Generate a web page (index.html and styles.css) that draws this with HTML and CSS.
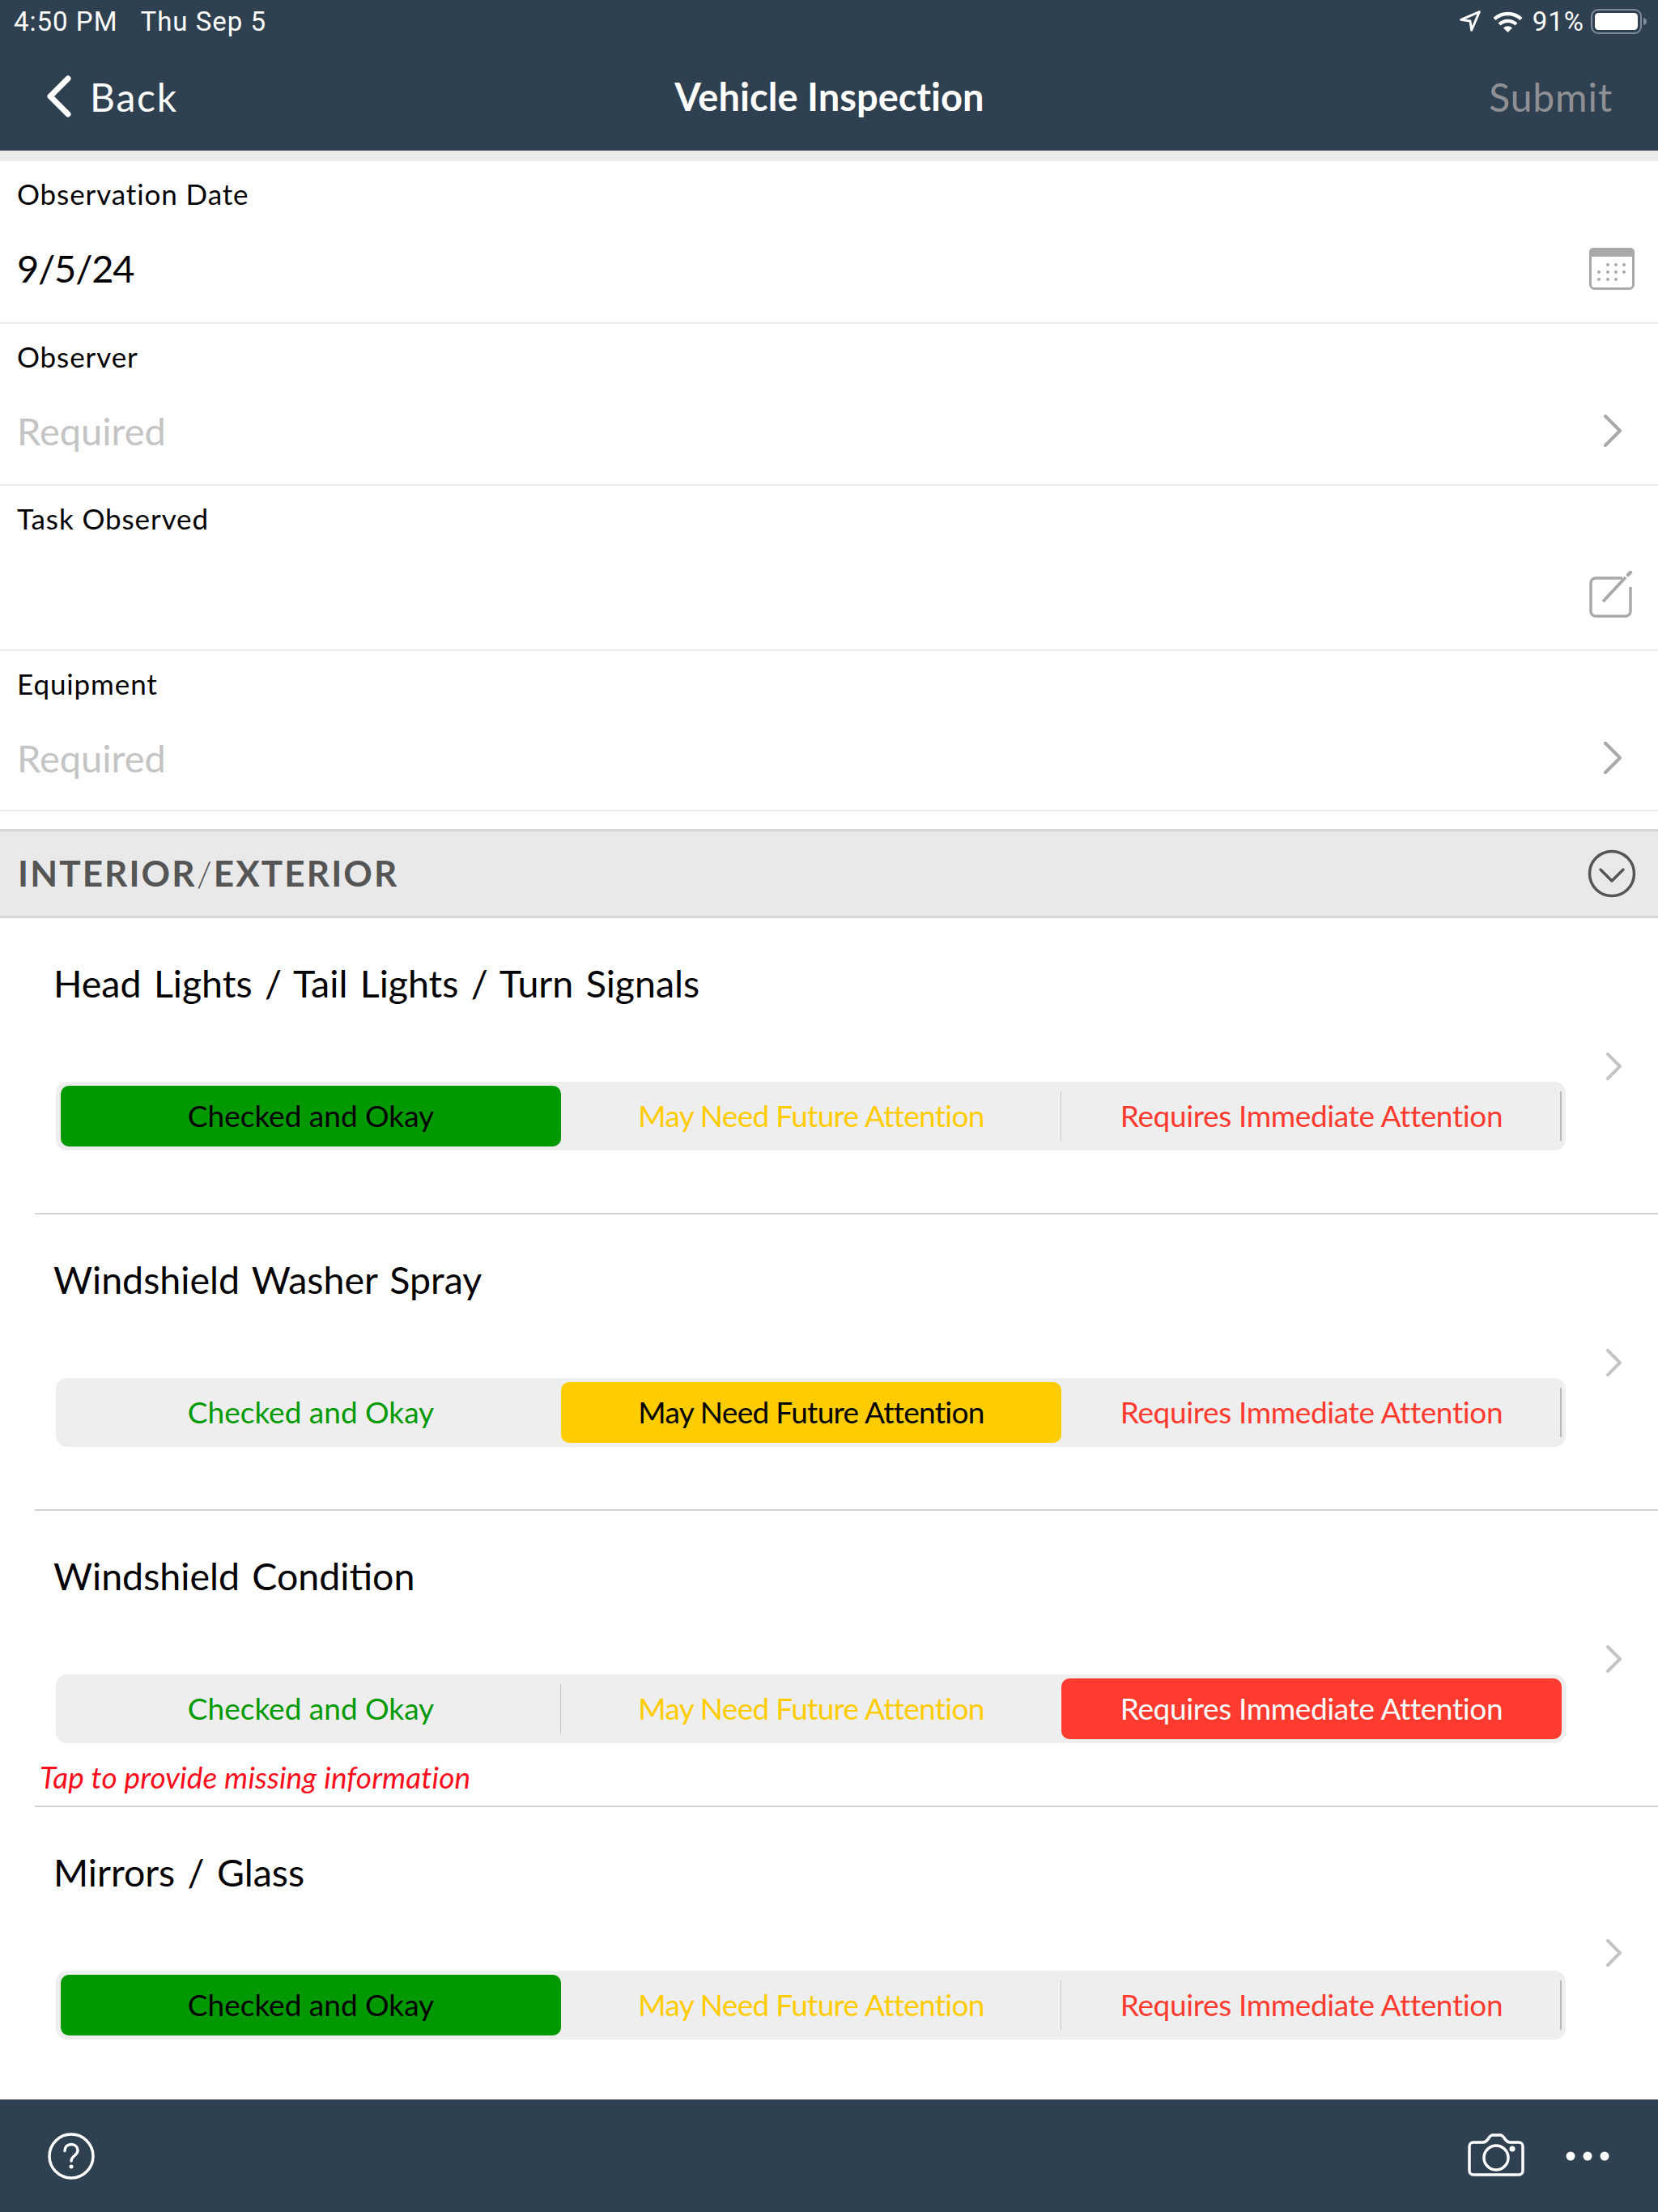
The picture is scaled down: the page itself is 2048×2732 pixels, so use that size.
FILE: index.html
```html
<!DOCTYPE html>
<html lang="en">
<head>
<meta charset="utf-8">
<title>Vehicle Inspection</title>
<link rel="stylesheet" href="styles.css">
</head>
<body>
<div class="app">
  <header class="topbar">
    <div class="status">
      <div class="status-left"><span>4:50 PM</span><span>Thu Sep 5</span></div>
      <div class="status-right">
        <svg class="ic-loc" viewBox="0 0 24 24"><path d="M22.5 1.5 1.5 10.5l10.5 1.5 1.5 10.5z" fill="none" stroke="#fff" stroke-width="2.6" stroke-linejoin="round"/></svg>
        <svg class="ic-wifi" viewBox="0 0 37 27"><path d="M2 10.5a24 24 0 0 1 33 0M8 17a15.500 15.500 0 0 1 21 0" fill="none" stroke="#fff" stroke-width="4.400"/><path d="M13 21.500a8 8 0 0 1 11 0l-5.500 5.500z" fill="#fff"/></svg>
        <span class="pct">91%</span>
        <svg class="ic-batt" viewBox="0 0 69 31"><rect x="1" y="1" width="61" height="29" rx="8" fill="none" stroke="#7f8b97" stroke-width="2"/><rect x="5" y="5" width="53" height="21" rx="4.500" fill="#fff"/><path d="M65 11c2.500.5 4 2 4 4.500s-1.500 4-4 4.500z" fill="#7f8b97"/></svg>
      </div>
    </div>
    <nav class="nav">
      <a class="back"><svg class="ic-back" viewBox="0 0 32 52"><path d="M27 4 5 26l22 22" fill="none" stroke="#fff" stroke-width="7" stroke-linecap="round" stroke-linejoin="round"/></svg><span>Back</span></a>
      <h1 class="nav-title">Vehicle Inspection</h1>
      <a class="submit">Submit</a>
    </nav>
  </header>

  <main class="content">
    <section class="field field-first">
      <div class="field-label">Observation Date</div>
      <div class="field-value">
        <span class="date">9/5/24</span>
        <svg class="slot ic-cal" viewBox="0 0 60 54"><rect x="3.500" y="2.500" width="53" height="49" rx="5" fill="#fff" stroke="#a9a9a9" stroke-width="3"/><path d="M2 12V6a5 5 0 0 1 5-5h46a5 5 0 0 1 5 5v6z" fill="#a9a9a9"/><g fill="#a9a9a9"><circle cx="25" cy="22" r="2"/><circle cx="35" cy="22" r="2"/><circle cx="45" cy="22" r="2"/><circle cx="14" cy="31" r="2"/><circle cx="25" cy="31" r="2"/><circle cx="35" cy="31" r="2"/><circle cx="45" cy="31" r="2"/><circle cx="14" cy="40" r="2"/><circle cx="25" cy="40" r="2"/><circle cx="35" cy="40" r="2"/></g></svg>
      </div>
    </section>
    <section class="field">
      <div class="field-label">Observer</div>
      <div class="field-value placeholder">
        <span>Required</span>
        <svg class="slot chev" viewBox="0 0 60 40"><path d="M22 2l18 18-18 18" fill="none" stroke="#a9a9a9" stroke-width="4" stroke-linecap="round" stroke-linejoin="round"/></svg>
      </div>
    </section>
    <section class="field field-tall">
      <div class="field-label">Task Observed</div>
      <div class="field-value">
        <span></span>
        <svg class="slot ic-edit" viewBox="0 0 60 58"><path d="M43 9H10a6 6 0 0 0-6 6v35a6 6 0 0 0 6 6h37a6 6 0 0 0 6-6V20" fill="none" stroke="#a9a9a9" stroke-width="3.500"/><path d="M19 38 47 8" fill="none" stroke="#a9a9a9" stroke-width="4"/><path d="M50 5l3-3" fill="none" stroke="#a9a9a9" stroke-width="4.500" stroke-linecap="round"/></svg>
      </div>
    </section>
    <section class="field field-short">
      <div class="field-label">Equipment</div>
      <div class="field-value placeholder">
        <span>Required</span>
        <svg class="slot chev" viewBox="0 0 60 40"><path d="M22 2l18 18-18 18" fill="none" stroke="#a9a9a9" stroke-width="4" stroke-linecap="round" stroke-linejoin="round"/></svg>
      </div>
    </section>

    <div class="section-head">
      <h2>INTERIOR<span class="slash">/</span>EXTERIOR</h2>
      <svg class="slot" viewBox="0 0 60 60"><circle cx="30" cy="30" r="27.500" fill="none" stroke="#555" stroke-width="3.500"/><path d="M16 25l14 14 14-14" fill="none" stroke="#555" stroke-width="3.500" stroke-linecap="round" stroke-linejoin="round"/></svg>
    </div>

    <article class="item">
      <div class="item-main">
        <div class="item-title">Head Lights / Tail Lights / Turn Signals</div>
        <div class="segments">
          <div class="seg seg-green selected">Checked and Okay</div>
          <div class="seg seg-yellow sep">May Need Future Attention</div>
          <div class="seg seg-red sep">Requires Immediate Attention</div>
        </div>
      </div>
      <svg class="slot item-chev" viewBox="0 0 60 34"><path d="M25 2l15 15-15 15" fill="none" stroke="#c4c4c8" stroke-width="4" stroke-linecap="round" stroke-linejoin="round"/></svg>
    </article>
    <article class="item">
      <div class="item-main">
        <div class="item-title">Windshield Washer Spray</div>
        <div class="segments">
          <div class="seg seg-green">Checked and Okay</div>
          <div class="seg seg-yellow selected">May Need Future Attention</div>
          <div class="seg seg-red sep">Requires Immediate Attention</div>
        </div>
      </div>
      <svg class="slot item-chev" viewBox="0 0 60 34"><path d="M25 2l15 15-15 15" fill="none" stroke="#c4c4c8" stroke-width="4" stroke-linecap="round" stroke-linejoin="round"/></svg>
    </article>
    <article class="item">
      <div class="item-main">
        <div class="item-title">Windshield Condition</div>
        <div class="segments">
          <div class="seg seg-green sep">Checked and Okay</div>
          <div class="seg seg-yellow">May Need Future Attention</div>
          <div class="seg seg-red selected">Requires Immediate Attention</div>
        </div>
        <div class="item-note">Tap to provide missing information</div>
      </div>
      <svg class="slot item-chev" viewBox="0 0 60 34"><path d="M25 2l15 15-15 15" fill="none" stroke="#c4c4c8" stroke-width="4" stroke-linecap="round" stroke-linejoin="round"/></svg>
    </article>
    <article class="item item-last">
      <div class="item-main">
        <div class="item-title">Mirrors / Glass</div>
        <div class="segments">
          <div class="seg seg-green selected">Checked and Okay</div>
          <div class="seg seg-yellow sep">May Need Future Attention</div>
          <div class="seg seg-red sep">Requires Immediate Attention</div>
        </div>
      </div>
      <svg class="slot item-chev" viewBox="0 0 60 34"><path d="M25 2l15 15-15 15" fill="none" stroke="#c4c4c8" stroke-width="4" stroke-linecap="round" stroke-linejoin="round"/></svg>
    </article>
  </main>

  <footer class="bottombar">
    <a class="help"><svg viewBox="0 0 58 58"><circle cx="29" cy="29" r="27" fill="none" stroke="#fff" stroke-width="3.500"/><path d="M21 22.500c0-5 3.500-8 8-8s8 3 8 7.500c0 6-8 7-8 13" fill="none" stroke="#fff" stroke-width="3.500" stroke-linecap="round"/><circle cx="29" cy="42" r="2.500" fill="#fff"/></svg></a>
    <div class="bottom-right">
      <svg class="ic-cam" viewBox="0 0 70 54"><path d="M7 11h12c3 0 4-1 6-4 1.500-2.500 3-5 6-5h9c3 0 4.500 2.500 6 5 2 3 3 4 6 4h11c3 0 5 2 5 5v30c0 3-2 5-5 5H7c-3 0-5-2-5-5V16c0-3 2-5 5-5z" fill="none" stroke="#fff" stroke-width="3.500"/><circle cx="35" cy="30" r="15" fill="none" stroke="#fff" stroke-width="3.500"/><circle cx="55" cy="19" r="3.500" fill="#fff"/></svg>
      <svg class="ic-more" viewBox="0 0 54 12"><circle cx="6" cy="6" r="5.500" fill="#fff"/><circle cx="27" cy="6" r="5.500" fill="#fff"/><circle cx="48" cy="6" r="5.500" fill="#fff"/></svg>
    </div>
  </footer>
</div>
</body>
</html>
```
FILE: styles.css
```css
* { box-sizing: border-box; }
html, body { margin: 0; padding: 0; }
body { font-family: "Lato", "Open Sans", sans-serif; color: #000; background: #fff; }
.app { width: 2048px; height: 2732px; display: flex; flex-direction: column; overflow: hidden; }

.topbar { height: 186px; background: #2f4051; color: #fff; flex: none; }
.status { height: 52px; display: flex; justify-content: space-between; align-items: center; padding: 0 14px 0 17px; font-family: "Roboto", sans-serif; font-size: 33px; letter-spacing: 1px; }
.status-left { display: flex; gap: 28px; }
.status-right { display: flex; align-items: center; }
.ic-loc { width: 26px; height: 26px; margin-right: 15px; }
.ic-wifi { width: 37px; height: 27px; margin-right: 12px; }
.pct { margin-right: 8px; }
.ic-batt { width: 69px; height: 31px; }

.nav { height: 134px; padding: 0 56px 0 57px; display: grid; grid-template-columns: 1fr auto 1fr; align-items: center; font-size: 48px; }
.back { display: flex; align-items: center; gap: 22px; letter-spacing: 1.800px; }
.ic-back { width: 32px; height: 52px; }
.nav-title { margin: 0; font-size: 47px; font-weight: 700; letter-spacing: 0.050px; }
.submit { justify-self: end; color: #8f9094; letter-spacing: 0.900px; }

.content { flex: 1; min-height: 0; padding-top: 13px; background: linear-gradient(#ececec 13px, #fff 13px); }

.field { padding: 18px 27px 36px 21px; border-bottom: 2px solid #ebebeb; }
.field-first { padding-bottom: 37px; }
.field-tall { padding-bottom: 40px; }
.field-short { padding-bottom: 34px; }
.field-label { font-size: 35px; letter-spacing: 0.900px; line-height: 44px; height: 44px; margin-bottom: 39px; }
.field-value { display: flex; justify-content: space-between; align-items: center; height: 61px; font-size: 47px; }
.date { letter-spacing: -1.200px; }
.placeholder { color: #c4c4c4; }
.slot { width: 60px; flex: none; display: block; }
.chev { height: 40px; }
.ic-cal { margin-top: 3px; }
.ic-edit { margin-top: 4px; }

.section-head { margin-top: 22px; height: 110px; padding: 0 27px 0 22px; display: flex; justify-content: space-between; align-items: center; background: #e9e9e9; border-top: 3px solid #d6d6d6; border-bottom: 3px solid #d6d6d6; }
.section-head h2 { margin: 0; padding-bottom: 2px; font-size: 44px; font-weight: 700; color: #555; letter-spacing: 2.100px; }
.slash { font-weight: 300; }

.item { height: 366px; margin-left: 43px; padding-right: 27px; border-bottom: 2px solid #d2d2d2; display: grid; grid-template-columns: 1fr 60px; column-gap: 27px; align-items: center; }
.item-last { height: 359px; border-bottom: 0; }
.item-main { align-self: start; padding: 51px 0 0 26px; }
.item-title { margin-left: -3px; font-size: 46.500px; word-spacing: 3.500px; line-height: 58px; height: 58px; margin-bottom: 93px; }
.item-chev { height: 34px; margin-top: 1px; }

.segments { height: 85px; padding: 5px 5px 5px 6px; display: grid; grid-template-columns: repeat(3, 1fr); background: #eeeeee; border-radius: 14px; }
.seg { position: relative; display: flex; align-items: center; justify-content: center; padding-bottom: 3px; font-size: 37px; border-radius: 10px; }
.seg-green { color: #029a02; }
.seg-yellow { color: #ffcc00; letter-spacing: -0.700px; }
.seg-red { color: #ff3b30; letter-spacing: -0.370px; }
.seg-green.selected { background: #029802; color: #000; }
.seg-yellow.selected { background: #ffcc00; color: #000; }
.seg-red.selected { background: #ff3b30; color: #fff; }
.seg.sep::after { content: ""; position: absolute; right: 0; top: 7px; bottom: 7px; width: 1px; background: #c4c4c4; }
.seg-red.sep::after { background: #b8b8b8; width: 2px; }

.item-note { margin: 18px 0 0 -20px; font-size: 37px; letter-spacing: 0.150px; line-height: 48px; font-style: italic; color: #fb0d1b; }

.bottombar { flex: none; height: 139px; background: #2f4051; display: flex; justify-content: space-between; align-items: center; padding: 0 60px 0 59px; }
.help, .help svg { display: block; width: 58px; height: 58px; }
.bottom-right { display: flex; align-items: center; gap: 51px; }
.ic-cam { width: 70px; height: 54px; margin-top: -2px; }
.ic-more { width: 54px; height: 12px; }
```
